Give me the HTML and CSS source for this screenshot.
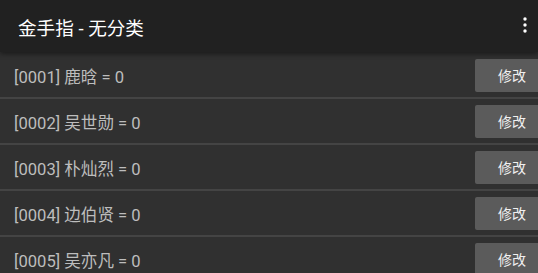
FILE: index.html
```html
<!DOCTYPE html>
<html lang="zh">
<head>
<meta charset="utf-8">
<link rel="stylesheet" href="styles.css">
</head>
<body>
<header class="appbar">
  <h1 class="title">金手指 - 无分类</h1>
  <svg class="menu" width="4" height="16" viewBox="0 0 4 16"><circle cx="2" cy="2" r="1.7" fill="#fff"/><circle cx="2" cy="8" r="1.7" fill="#fff"/><circle cx="2" cy="14" r="1.7" fill="#fff"/></svg>
</header>
<ul class="list">
  <li class="row"><span class="label">[0001] 鹿晗 = 0</span><button class="edit">修改</button></li>
  <li class="row"><span class="label">[0002] 吴世勋 = 0</span><button class="edit">修改</button></li>
  <li class="row"><span class="label">[0003] 朴灿烈 = 0</span><button class="edit">修改</button></li>
  <li class="row"><span class="label">[0004] 边伯贤 = 0</span><button class="edit">修改</button></li>
  <li class="row"><span class="label">[0005] 吴亦凡 = 0</span><button class="edit">修改</button></li>
</ul>
</body>
</html>
```
FILE: styles.css
```css
html, body {
  margin: 0;
  padding: 0;
  background: #303030;
  overflow: hidden;
  height: 273px;
  font-family: Roboto, "Noto Sans CJK SC", sans-serif;
}
.appbar {
  position: relative;
  z-index: 1;
  height: 52px;
  background: #212121;
  display: flex;
  align-items: center;
  justify-content: space-between;
  padding: 0 11px 0 18px;
  box-shadow: 0 2px 5px rgba(0,0,0,0.45);
}
.title {
  margin: 0;
  font-size: 18.6px;
  font-weight: normal;
  color: #fff;
}
.menu {
  display: block;
  margin-top: -2px;
}
.list {
  list-style: none;
  margin: 0;
  padding: 0;
  padding-top: 1px;
}
.row {
  height: 44px;
  display: flex;
  align-items: center;
  justify-content: space-between;
  border-bottom: 2px solid #444;
  padding-left: 14px;
}
.label {
  color: #bdbdbd;
  font-size: 16.6px;
  padding-top: 2px;
}
.edit {
  width: 70px;
  height: 33px;
  margin-right: -7px;
  border: none;
  border-radius: 2px;
  background: #5b5b5b;
  color: #f0f0f0;
  font-family: inherit;
  font-size: 14px;
  text-align: left;
  padding: 0 0 0 23px;
}
```
